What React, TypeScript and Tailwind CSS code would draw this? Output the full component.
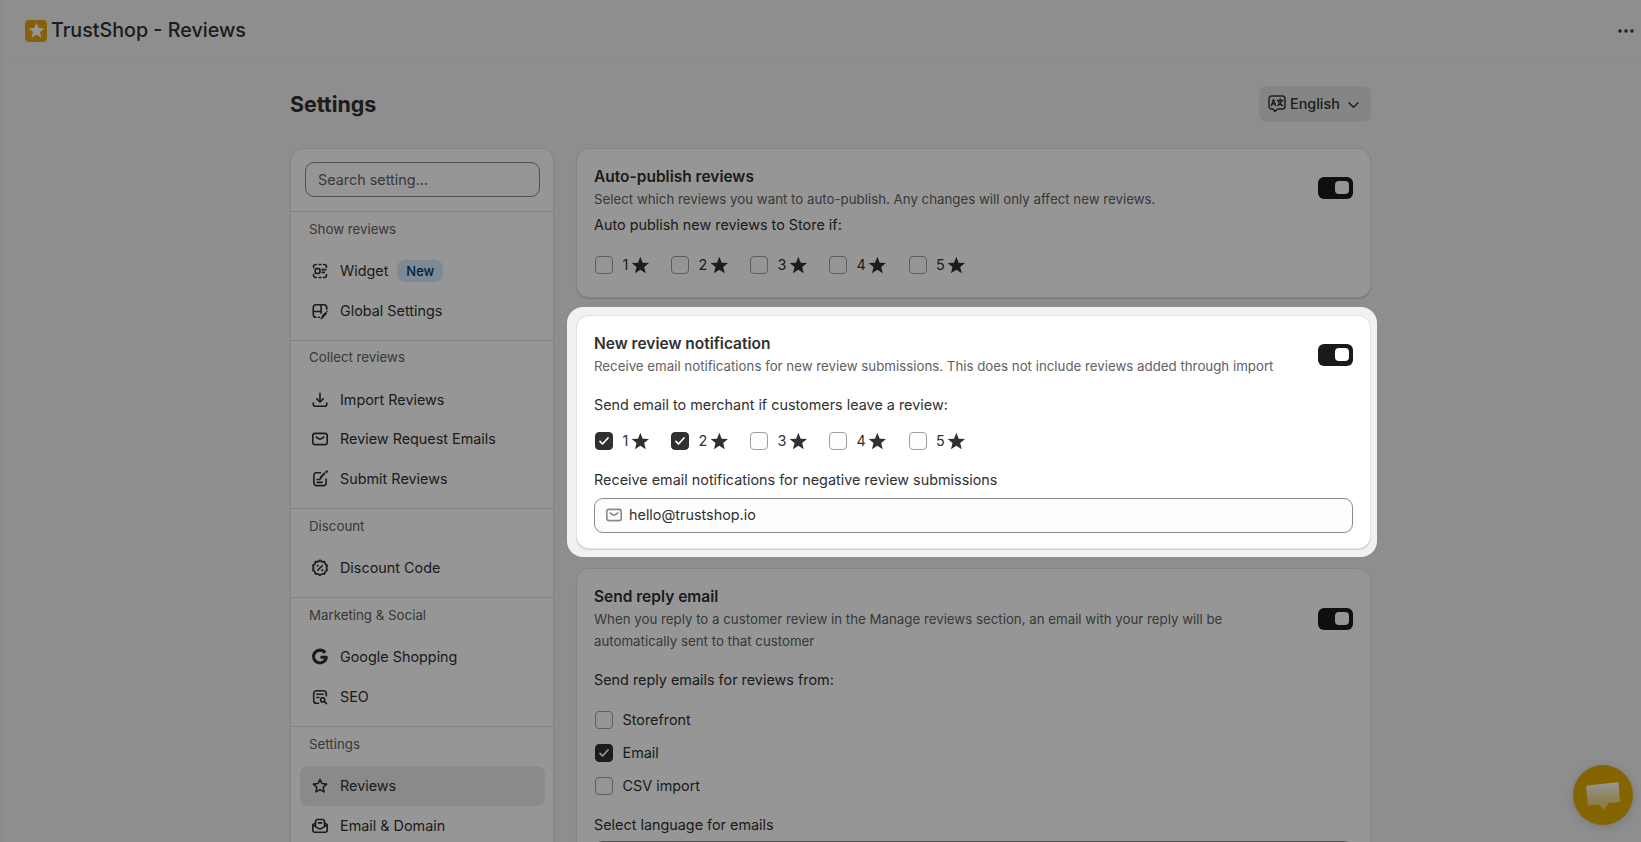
import type { ReactNode } from 'react';

type IconName =
  | 'widget' | 'theme' | 'import' | 'email' | 'submit' | 'discount'
  | 'google' | 'seo' | 'star' | 'domain';

const iconPaths: Record<IconName, ReactNode> = {
  widget: (
    <>
      <path d="M2.8 6V5.2A2.4 2.4 0 0 1 5.2 2.8H6M9 2.8h2M14 2.8h.8a2.4 2.4 0 0 1 2.4 2.4V6M17.2 14v.8a2.4 2.4 0 0 1-2.4 2.4H14M11 17.2H9M6 17.2h-.8a2.4 2.4 0 0 1-2.4-2.4V14" />
      <rect x="4.7" y="7.3" width="5.2" height="5.4" rx="1" />
      <path d="M12.4 8.5h4M12.4 11.5h2.4" />
    </>
  ),
  theme: (
    <>
      <path d="M17.5 8V6.2A3.2 3.2 0 0 0 14.3 3H5.7a3.2 3.2 0 0 0-3.2 3.2v7.6A3.2 3.2 0 0 0 5.5 17M2.5 10.5h8.7M11.2 3v9.5M8.3 17h1" />
      <path d="m12.8 17 .4-1.2 3.2-3.2" strokeWidth="2.6" />
      <path d="M17.8 10.5v.1M11.2 18.4h.1" />
    </>
  ),
  import: <path d="M10 2.5V12M6.5 8.8l3.5 3.4 3.5-3.4M2.5 13.5v1.2A2.3 2.3 0 0 0 4.8 17h10.4a2.3 2.3 0 0 0 2.3-2.3v-1.2" />,
  email: (
    <>
      <rect x="2" y="3.7" width="16" height="12.6" rx="2.7" />
      <path d="m5.8 7.8 3.1 2a2 2 0 0 0 2.2 0l3.1-2" />
    </>
  ),
  submit: (
    <>
      <path d="M10.5 3H6a2.8 2.8 0 0 0-2.8 2.8v8.7A2.8 2.8 0 0 0 6 17.3h8a2.8 2.8 0 0 0 2.8-2.8V10M6.8 10.6h3M6.8 13.8h5.5" />
      <path d="m10.6 9.4.8-1.9 3.7-3.7" strokeWidth="2.2" />
      <path d="m17.4 1.9.2-.2" strokeWidth="2.6" />
    </>
  ),
  discount: (
    <>
      <path
        d="m10 1.6 2.1 1.5 2.6-.1.7 2.5 2.1 1.5-.9 2.4.9 2.4-2.1 1.5-.7 2.5-2.6-.1-2.1 1.5-2.1-1.5-2.6.1-.7-2.5-2.1-1.5.9-2.4L2.5 7l2.1-1.5.7-2.500 2.600.1Z"
        transform="translate(-.7 -.25) scale(1.07)"
      />
      <path d="m7.5 12.5 5-5" />
      <path d="M7.3 7.5h.2M12.5 12.5h.2" strokeWidth="2.2" />
    </>
  ),
  google: <path d="M15.7 5.3A7.1 7.1 0 1 0 17 10.3h-6.5" strokeWidth="3.4" strokeLinecap="butt" />,
  seo: (
    <>
      <path d="M8.5 17H6.2A3.2 3.2 0 0 1 3 13.8V6.2A3.2 3.2 0 0 1 6.2 3h7.6A3.2 3.2 0 0 1 17 6.2v2.3M6.5 7h7M6.5 10.5h2.3" />
      <circle cx="13" cy="13.2" r="2.3" />
      <path d="m14.8 15 2.4 2.3" />
    </>
  ),
  star: <path d="m10 2.7 2.15 4.5 5.1.7-3.7 3.5.9 5.1L10 14l-4.450 2.500.9-5.100-3.700-3.500 5.100-.7Z" />,
  domain: (
    <>
      <path d="M5 6.5V5a2.2 2.2 0 0 1 2.2-2.2h5.6A2.2 2.2 0 0 1 15 5v1.5M8 6.500h4" />
      <path d="M4.5 7 2 8.5v6.300a2.200 2.200 0 0 0 2.200 2.200h11.600a2.200 2.200 0 0 0 2.200-2.200V8.500L15.500 7M2.300 9l5.900 3.600a3.500 3.500 0 0 0 3.600 0L17.700 9M5 7v3M15 7v3" />
    </>
  ),
};

function Icon({ name, className = '' }: { name: IconName; className?: string }) {
  return (
    <svg viewBox="0 0 20 20" className={`h-[18px] w-[18px] shrink-0 ${className}`} fill="none" stroke="currentColor" strokeWidth="1.8" strokeLinecap="round" strokeLinejoin="round">
      {iconPaths[name]}
    </svg>
  );
}

function StarGlyph({ className }: { className: string }) {
  return (
    <svg viewBox="0 0 20 20" className={className} fill="currentColor">
      <path d="m10 .8 2.5 6.3 6.8.4-5.2 4.3 1.7 6.7-5.8-3.7-5.8 3.7 1.7-6.7L.7 7.5l6.8-.4Z" />
    </svg>
  );
}

interface NavItem {
  label: string;
  icon: IconName;
  badge?: string;
  active?: boolean;
}

const sections: { title: string; items: NavItem[] }[] = [
  {
    title: 'Show reviews',
    items: [
      { label: 'Widget', icon: 'widget', badge: 'New' },
      { label: 'Global Settings', icon: 'theme' },
    ],
  },
  {
    title: 'Collect reviews',
    items: [
      { label: 'Import Reviews', icon: 'import' },
      { label: 'Review Request Emails', icon: 'email' },
      { label: 'Submit Reviews', icon: 'submit' },
    ],
  },
  { title: 'Discount', items: [{ label: 'Discount Code', icon: 'discount' }] },
  {
    title: 'Marketing & Social',
    items: [
      { label: 'Google Shopping', icon: 'google' },
      { label: 'SEO', icon: 'seo' },
    ],
  },
  {
    title: 'Settings',
    items: [
      { label: 'Reviews', icon: 'star', active: true },
      { label: 'Email & Domain', icon: 'domain' },
    ],
  },
];

const cardClass = 'rounded-[13px] border border-[#e2e2e2] bg-white shadow-[0_1px_1px_rgba(0,0,0,0.14)]';

function Sidebar() {
  return (
    <aside className={`h-[760px] w-[264px] shrink-0 ${cardClass}`}>
      <div className="h-[62px] pt-[13px] pr-[13px] pl-3.5">
        <div className="flex h-[35px] items-center rounded-[9px] border border-[#8a8a8a] bg-[#fdfdfd] px-3 text-[#616161]">
          Search setting...
        </div>
      </div>
      {sections.map((section) => (
        <div key={section.title} className="border-t border-[#dfdfdf] pb-[9.2px]">
          <h3 className="h-[39.2px] px-[18px] pt-[6.6px] text-[13.3px] leading-5 text-[#616161]">{section.title}</h3>
          {section.items.map((item) => (
            <div
              key={item.label}
              className={`mr-2 ml-[9px] flex h-[39.7px] items-center rounded-lg pl-[11px] ${item.active ? 'bg-[#ebebeb]' : ''}`}
            >
              <Icon name={item.icon} />
              <span className="ml-[11px]">{item.label}</span>
              {item.badge && (
                <span className="ml-[9px] flex h-[22px] items-center rounded-lg bg-[#d5ebff] px-[9px] text-[13px] font-medium text-[#003a5a]">{item.badge}</span>
              )}
            </div>
          ))}
        </div>
      ))}
    </aside>
  );
}

function Checkbox({ checked }: { checked?: boolean }) {
  return (
    <span
      className={`flex h-[18px] w-[18px] shrink-0 items-center justify-center rounded border ${
        checked ? 'border-[#303030] bg-[#303030]' : 'border-[#a0a0a0] bg-[#fdfdfd]'
      }`}
    >
      {checked && (
        <svg viewBox="0 0 12 12" className="h-3 w-3" fill="none" stroke="white" strokeWidth="1.7" strokeLinecap="round" strokeLinejoin="round">
          <path d="m2 6.3 2.5 2.7L10 3" />
        </svg>
      )}
    </span>
  );
}

function StarFilters({ checked = [] }: { checked?: number[] }) {
  return (
    <div className="flex h-[19px] items-center gap-[21.8px] pl-px">
      {[1, 2, 3, 4, 5].map((n) => (
        <div key={n} className="flex items-center">
          <Checkbox checked={checked.includes(n)} />
          <span className="ml-[9.5px]">{n}</span>
          <StarGlyph className="ml-[2.2px] mt-px h-[18.7px] w-[18.7px]" />
        </div>
      ))}
    </div>
  );
}

function CardHeader({ title, description }: { title: string; description: string }) {
  return (
    <div className="flex items-center justify-between">
      <div className="max-w-[690px]">
        <h2 className="text-[15.5px] leading-[22px] font-semibold">{title}</h2>
        <p className="text-[13.29px] leading-[22px] text-[#616161]">{description}</p>
      </div>
      <div className="flex h-[22px] w-[35px] shrink-0 items-center justify-end rounded-md bg-[#1a1a1a] pr-1 pb-px">
        <div className="h-[13px] w-3.5 rounded-[4px] bg-white" />
      </div>
    </div>
  );
}

export default function App() {
  return (
    <div className="relative h-[842px] w-full overflow-hidden bg-[#f1f1f1] font-['Inter',sans-serif] text-[14.38px] leading-5 text-[#303030]">
      <div className="border-l-[3px] border-[#ececec]">
        <header className="flex h-[60px] items-center justify-between border-b border-[#ebebeb] pt-0.5 pr-[7px] pl-[22px]">
          <div className="flex items-center">
            <div className="flex h-[22px] w-[22px] items-center justify-center rounded bg-[#e1a512] text-white">
              <StarGlyph className="h-[17px] w-[17px]" />
            </div>
            <span className="-mt-px ml-1 text-[19.7px] font-medium">TrustShop - Reviews</span>
          </div>
          <svg viewBox="0 0 16 4" className="h-1 w-4" fill="currentColor">
            <circle cx="2" cy="2" r="1.7" />
            <circle cx="8" cy="2" r="1.7" />
            <circle cx="14" cy="2" r="1.7" />
          </svg>
        </header>

        <main className="ml-[287px] w-[1081px]">
          <div className="flex h-[88px] items-center justify-between">
            <h1 className="text-[21.4px] font-bold">Settings</h1>
            <button className="flex h-9 w-[112px] items-center rounded-lg bg-[#e3e3e3] pl-[9px] font-medium">
              <svg viewBox="0 0 18 18" className="h-[18px] w-[18px]" fill="none" stroke="currentColor" strokeWidth="1.4" strokeLinecap="round" strokeLinejoin="round">
                <path d="M3.5 1h11A2.5 2.5 0 0 1 17 3.5v8a2.5 2.5 0 0 1-2.5 2.5h-5L7 16.5 5 14H3.5A2.5 2.5 0 0 1 1 11.5v-8A2.5 2.5 0 0 1 3.500 1Z" />
                <path d="m3.5 10.5 2-6 2 6M4.2 8.8h2.6M9.5 5.5H15M12.2 4v1.5M13.8 5.5c-.5 2-2 4-4 5M10.5 7c.8 1.8 2.3 3 4 3.5" />
              </svg>
              <span className="ml-1">English</span>
              <svg viewBox="0 0 12 8" className="mt-px ml-2 h-2 w-[11px]" fill="none" stroke="currentColor" strokeWidth="1.6" strokeLinecap="round" strokeLinejoin="round">
                <path d="m1 1.5 5 5 5-5" />
              </svg>
            </button>
          </div>

          <div className="flex items-start justify-between">
            <Sidebar />

            <div className="flex w-[795px] flex-col">
              <section className={`h-[150px] px-[17px] pt-[17px] ${cardClass}`}>
                <CardHeader title="Auto-publish reviews" description="Select which reviews you want to auto-publish. Any changes will only affect new reviews." />
                <p className="mt-[5px]">Auto publish new reviews to Store if:</p>
                <div className="mt-5">
                  <StarFilters />
                </div>
              </section>

              <div className="relative mt-[17px]">
                <section className={`h-[234px] px-[17px] pt-[17px] ${cardClass}`}>
                  <CardHeader title="New review notification" description="Receive email notifications for new review submissions. This does not include reviews added through import" />
                  <p className="mt-[18px]">Send email to merchant if customers leave a review:</p>
                  <div className="mt-4">
                    <StarFilters checked={[1, 2]} />
                  </div>
                  <p className="mt-5">Receive email notifications for negative review submissions</p>
                  <div className="mt-2 flex h-[35px] items-center rounded-[9px] border border-[#8a8a8a] bg-[#fdfdfd] pb-px pl-[10px]">
                    <Icon name="email" className="text-[#8a8a8a]" />
                    <span className="ml-1.5">hello@trustshop.io</span>
                  </div>
                </section>
                {/* Spotlight: dims everything outside the highlighted card */}
                <div className="pointer-events-none absolute -top-2 -right-[6px] -bottom-2 -left-[9px] z-50 rounded-2xl shadow-[0_0_0_2000px_rgba(0,0,0,0.41)]" />
              </div>

              <section className={`mt-[19px] h-[400px] px-[17px] pt-[17px] ${cardClass}`}>
                <CardHeader
                  title="Send reply email"
                  description="When you reply to a customer review in the Manage reviews section, an email with your reply will be automatically sent to that customer"
                />
                <p className="mt-[18px]">Send reply emails for reviews from:</p>
                <div className="mt-5 flex flex-col gap-[13px] pl-px">
                  {['Storefront', 'Email', 'CSV import'].map((source) => (
                    <div key={source} className="flex h-5 items-center gap-[9.5px]">
                      <Checkbox checked={source === 'Email'} />
                      {source}
                    </div>
                  ))}
                </div>
                <p className="mt-[19px]">Select language for emails</p>
                <div className="mt-1.5 h-[35px] rounded-[9px] border border-[#8a8a8a] bg-[#fdfdfd]" />
              </section>
            </div>
          </div>
        </main>
      </div>

      {/* Chat launcher */}
      <div className="absolute right-2 bottom-[17px] flex h-[60px] w-[60px] items-center justify-center rounded-full bg-[#e0ac00] shadow-[0_2px_10px_rgba(0,0,0,0.15)]">
        <svg viewBox="0 0 34 28" className="mt-px h-7 w-[34px]">
          <defs>
            <linearGradient id="bubble" x1="0" y1="0" x2="0" y2="1">
              <stop offset="0" stopColor="#fff" />
              <stop offset="1" stopColor="#fff" stopOpacity=".35" />
            </linearGradient>
          </defs>
          <path d="M1.5 3.5 31 .3q1.500-.2 1.700 1.300l1.200 17q0 1.400-1.400 1.600l-10.200.8-3.500 6.500q-.6.600-1.200 0L13 22.700l-9.700.8q-1.300 0-1.500-1.500L.2 5q0-1.300 1.300-1.500Z" fill="url(#bubble)" />
        </svg>
      </div>
    </div>
  );
}
